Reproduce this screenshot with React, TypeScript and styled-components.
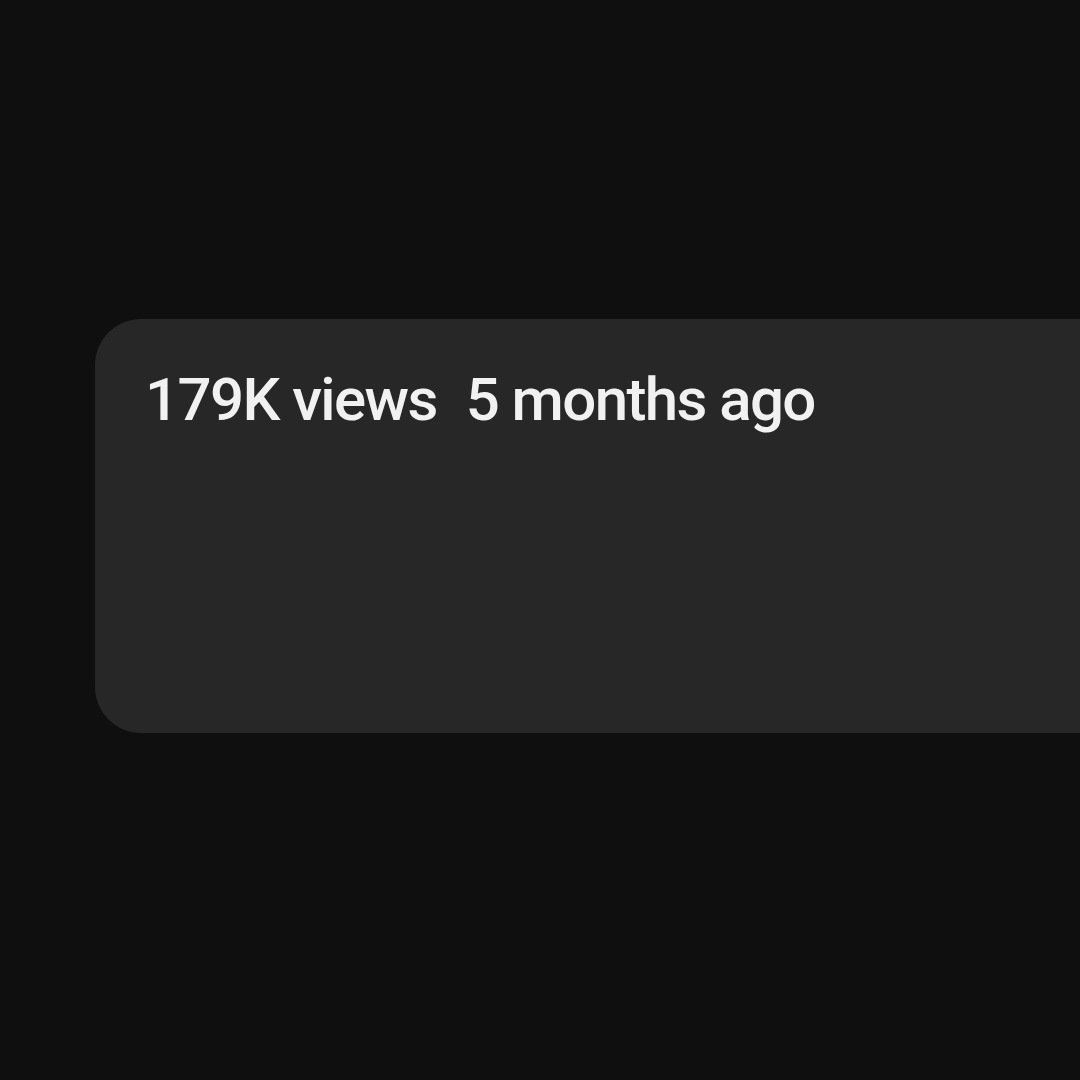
import React from "react";
import styled, { createGlobalStyle } from "styled-components";

const Global = createGlobalStyle`
  html, body { margin: 0; padding: 0; background: #0f0f0f; overflow: hidden; }
  body { width: 1080px; height: 1080px; }
`;

const Page = styled.div`
  width: 1080px;
  height: 1080px;
  background: #0f0f0f;
  padding: 319px 0 0 95px;
  box-sizing: border-box;
  overflow: hidden;
`;

const Description = styled.div`
  width: 1100px;
  height: 414px;
  box-sizing: border-box;
  background: #272727;
  border-radius: 46px 0 0 46px;
  padding: 38px 50px;
`;

const Info = styled.div`
  display: flex;
  font-family: Roboto, "Noto Sans", sans-serif;
  font-weight: 500;
  font-size: 60px;
  line-height: 86px;
  letter-spacing: -1.6px;
  color: #f1f1f1;
  white-space: nowrap;
`;

const InfoItem = styled.span`
  margin-right: 29px;
`;

export default function App() {
  return (
    <>
      <Global />
      <Page>
        <Description>
          <Info>
            <InfoItem>179K views</InfoItem>
            <InfoItem>5 months ago</InfoItem>
          </Info>
        </Description>
      </Page>
    </>
  );
}
